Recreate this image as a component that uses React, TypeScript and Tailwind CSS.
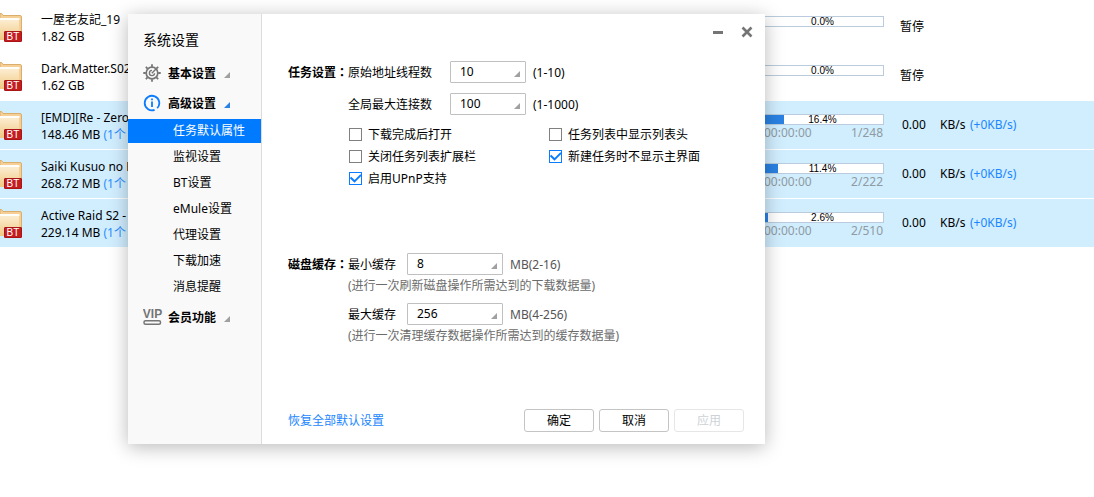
import { ReactNode } from "react";

interface Task {
  name: string;
  size: string;
  files?: string;
  percent: number;
  parts?: string;
}

const tasks: Task[] = [
  { name: "一屋老友記_19", size: "1.82 GB", percent: 0 },
  { name: "Dark.Matter.S02", size: "1.62 GB", percent: 0 },
  { name: "[EMD][Re - Zero", size: "148.46 MB", files: "(1个", percent: 16.4, parts: "1/248" },
  { name: "Saiki Kusuo no P", size: "268.72 MB", files: "(1个", percent: 11.4, parts: "2/222" },
  { name: "Active Raid S2 -", size: "229.14 MB", files: "(1个", percent: 2.6, parts: "2/510" },
];

const advancedItems = [
  "任务默认属性",
  "监视设置",
  "BT设置",
  "eMule设置",
  "代理设置",
  "下载加速",
  "消息提醒",
];

function FolderIcon() {
  return (
    <svg width="22" height="30" viewBox="0 0 22 30" className="mt-px shrink-0" aria-hidden="true">
      <defs>
        <linearGradient id="folder" x1="0" y1="0" x2="0" y2="1">
          <stop offset="0" stopColor="#fdf0d8" />
          <stop offset="1" stopColor="#f0c983" />
        </linearGradient>
      </defs>
      <path d="M0 1.5h1.5l1.5 2H20q1.5 0 1.5 1.5V27H0z" fill="#f5cf96" stroke="#dcae6c" />
      <path d="M0 6h19v22H0z" fill="url(#folder)" />
      <path d="M0 7h19.5" stroke="#fffdf8" strokeWidth="2" />
      <rect x="4.5" y="19.5" width="17" height="10" rx="0.5" fill="#c41d1f" stroke="#a91416" />
      <text x="13" y="28" textAnchor="middle" fontSize="10" fontFamily="Liberation Sans, sans-serif" fill="#fff">
        BT
      </text>
    </svg>
  );
}

function GearIcon() {
  return (
    <svg width="18" height="18" viewBox="0 0 18 18" fill="none" stroke="#757575" aria-hidden="true">
      <circle cx="9" cy="9" r="5.8" strokeWidth="1.7" />
      <path
        d="M9 0.3v2.5M9 15.2v2.5M0.3 9h2.5M15.2 9h2.5M2.8 2.8l1.8 1.8M13.4 13.4l1.8 1.8M2.8 15.2l1.8-1.8M13.4 4.6l1.8-1.8"
        strokeWidth="1.8"
      />
      <path d="M11.6 9.2A2.6 2.6 0 1 1 9 6.4M8.8 9.2l4.2-4.2" strokeWidth="1.4" />
    </svg>
  );
}

function InfoIcon() {
  return (
    <svg width="18" height="18" viewBox="0 0 18 18" fill="none" stroke="#0a7cff" aria-hidden="true">
      <path d="M11.6 15.9A7.3 7.3 0 1 1 14.2 14.2" strokeWidth="1.8" />
      <path d="M9 7.5V13M9 4.5v1.8" strokeWidth="1.8" />
    </svg>
  );
}

function VipIcon() {
  return (
    <svg width="20" height="18" viewBox="0 0 20 18" aria-hidden="true">
      <text x="9.5" y="10" textAnchor="middle" fontSize="12" fontFamily="Liberation Sans, sans-serif" fill="#757575">
        VIP
      </text>
      <rect x="1" y="12.7" width="16.5" height="3.5" rx="1.5" fill="none" stroke="#757575" strokeWidth="1.5" />
    </svg>
  );
}

function Corner({ className }: { className: string }) {
  return (
    <svg width="6" height="6" viewBox="0 0 6 6" className={className} aria-hidden="true">
      <path d="M6 0v6H0z" fill="currentColor" />
    </svg>
  );
}

function TaskRow({ task }: { task: Task }) {
  const active = Boolean(task.parts);
  return (
    <li className={`flex h-[49px] border-b border-white ${active ? "bg-[#d1eeff]" : "bg-white"}`}>
      <div className="flex flex-1 pt-2">
        <FolderIcon />
        <div className="ml-[19px] whitespace-nowrap">
          <p>{task.name}</p>
          <p>
            {task.size} <span className="text-[#2a8cff]">{task.files}</span>
          </p>
        </div>
      </div>
      <div className="w-[120px] pt-[13px]">
        <div className="relative h-[11px] border border-[#b9cbdc] bg-white">
          <div className="h-full bg-[#2a82e4]" style={{ width: `${task.percent}%` }} />
          <span className="absolute inset-0 pr-[3px] text-center font-['Liberation_Sans',sans-serif] text-[10px] leading-[10px]">
            {task.percent.toFixed(1)}%
          </span>
        </div>
        {active && (
          <div className="flex justify-between pr-px leading-4 text-[#8f9aa2]">
            <span>00:00:00</span>
            <span>{task.parts}</span>
          </div>
        )}
      </div>
      {active ? (
        <div className="flex w-[210px] items-center pb-[2px] pl-[18px]">
          <span className="w-[38px]">0.00</span>
          <span className="w-[30px]">KB/s</span>
          <span className="text-[#1a86ff]">(+0KB/s)</span>
        </div>
      ) : (
        <div className="flex w-[210px] items-center pb-[2px] pl-4">暂停</div>
      )}
    </li>
  );
}

function NavHeading({ icon, label, open }: { icon: ReactNode; label: string; open?: boolean }) {
  return (
    <button type="button" className="flex h-[30px] w-full items-center pl-[15px] font-bold">
      <span className="w-[25px]">{icon}</span>
      {label}
      <Corner className={open ? "ml-2 mt-1 text-[#2a82e4]" : "ml-2 mt-1 text-[#a0a0a0]"} />
    </button>
  );
}

function SectionTitle({ text }: { text: string }) {
  return (
    <h2 className="w-[60px] font-bold leading-[22px] whitespace-nowrap">
      {text}
      <span className="font-['Noto_Sans_CJK_TC',sans-serif]" lang="zh-Hant">：</span>
    </h2>
  );
}

function Picker({ id, value, options, wide }: { id: string; value: string; options: string[]; wide?: boolean }) {
  return (
    <span className={`relative ${wide ? "w-24" : "w-[76px]"}`}>
      <select
        id={id}
        defaultValue={value}
        className="block h-[22px] w-full appearance-none rounded-[1px] border border-[#c0c0c0] bg-white pl-[9px] text-xs"
      >
        {options.map((o) => (
          <option key={o}>{o}</option>
        ))}
      </select>
      <Corner className="pointer-events-none absolute right-[6px] bottom-[6px] text-[#a0a0a0]" />
    </span>
  );
}

function Check({ label, checked }: { label: string; checked?: boolean }) {
  return (
    <label className="flex h-[22px] items-center">
      <span className="relative mr-[6px] h-[13px] w-[13px]">
        <input
          type="checkbox"
          defaultChecked={checked}
          className="peer block h-[13px] w-[13px] appearance-none border border-[#808080] bg-white checked:border-[#0a7cff]"
        />
        <svg
          viewBox="0 0 13 13"
          className="pointer-events-none absolute inset-0 hidden peer-checked:block"
          fill="none"
          stroke="#0a7cff"
          strokeWidth="1.9"
          aria-hidden="true"
        >
          <path d="M1.5 5.5l4 3.8L12 2.8" />
        </svg>
      </span>
      {label}
    </label>
  );
}

function SettingsDialog() {
  return (
    <div
      role="dialog"
      aria-label="系统设置"
      className="absolute top-[14px] left-32 flex w-[637px] bg-white shadow-[0_3px_18px_rgba(0,0,0,0.28)]"
    >
      <nav className="w-[134px] border-r border-[#dcdcdc] bg-[#f9f9f9]">
        <h1 className="flex h-11 items-center pt-2 pl-[15px] text-sm">系统设置</h1>
        <NavHeading icon={<GearIcon />} label="基本设置" />
        <NavHeading icon={<InfoIcon />} label="高级设置" open />
        <ul className="flex flex-col gap-[2px] pt-px pb-[3px]">
          {advancedItems.map((item, i) => (
            <li key={item}>
              <button
                type="button"
                className={`block h-6 w-full pb-[2px] pl-[45px] text-left ${i === 0 ? "bg-[#007aff] text-white" : ""}`}
              >
                {item}
              </button>
            </li>
          ))}
        </ul>
        <NavHeading icon={<VipIcon />} label="会员功能" />
      </nav>

      <main className="flex flex-1 flex-col">
        <div className="flex h-9 items-center justify-end gap-[17px] pr-3">
          <button type="button" aria-label="最小化">
            <svg width="11" height="12" viewBox="0 0 11 12">
              <path d="M0 6.5h10" stroke="#757575" strokeWidth="3" />
            </svg>
          </button>
          <button type="button" aria-label="关闭">
            <svg width="12" height="12" viewBox="0 0 12 12">
              <path d="M1.5 1.5l9 9M10.5 1.5l-9 9" stroke="#757575" strokeWidth="2.6" />
            </svg>
          </button>
        </div>

        <section className="flex pt-[11px] pl-[26px]">
          <SectionTitle text="任务设置" />
          <div>
            <div className="flex items-center">
              <label htmlFor="threads" className="w-[102px]">原始地址线程数</label>
              <Picker id="threads" value="10" options={["1", "5", "10"]} />
              <span className="ml-[7px]">(1-10)</span>
            </div>
            <div className="mt-[10px] flex items-center">
              <label htmlFor="connections" className="w-[102px]">全局最大连接数</label>
              <Picker id="connections" value="100" options={["50", "100", "500", "1000"]} />
              <span className="ml-[7px]">(1-1000)</span>
            </div>
            <div className="mt-2 flex pl-px">
              <div className="w-[200px]">
                <Check label="下载完成后打开" />
                <Check label="关闭任务列表扩展栏" />
                <Check label="启用UPnP支持" checked />
              </div>
              <div>
                <Check label="任务列表中显示列表头" />
                <Check label="新建任务时不显示主界面" checked />
              </div>
            </div>
          </div>
        </section>

        <section className="mt-16 flex pl-[26px]">
          <SectionTitle text="磁盘缓存" />
          <div>
            <div className="flex items-center">
              <label htmlFor="min-cache" className="w-[59px]">最小缓存</label>
              <Picker id="min-cache" value="8" options={["2", "4", "8", "16"]} wide />
              <span className="ml-[7px] text-[#555]">MB(2-16)</span>
            </div>
            <p className="pt-[2px] text-[#6b6b6b]">(进行一次刷新磁盘操作所需达到的下载数据量)</p>
            <div className="mt-[9px] flex items-center">
              <label htmlFor="max-cache" className="w-[59px]">最大缓存</label>
              <Picker id="max-cache" value="256" options={["4", "64", "128", "256"]} wide />
              <span className="ml-[7px] text-[#555]">MB(4-256)</span>
            </div>
            <p className="pt-[2px] text-[#6b6b6b]">(进行一次清理缓存数据操作所需达到的缓存数据量)</p>
          </div>
        </section>

        <footer className="mt-[65px] flex items-center gap-[5px] pr-[21px] pb-3 pl-[26px]">
          <a href="#reset" className="mr-auto text-[#1a86ff]">恢复全部默认设置</a>
          <button type="button" className="h-[23px] w-[70px] rounded-[3px] border border-[#c4c4c4]">确定</button>
          <button type="button" className="h-[23px] w-[70px] rounded-[3px] border border-[#c4c4c4]">取消</button>
          <button type="button" disabled className="h-[23px] w-[70px] rounded-[3px] border border-[#e6e6e6] text-[#cdd2d6]">应用</button>
        </footer>
      </main>
    </div>
  );
}

export default function App() {
  return (
    <div className="relative min-h-screen overflow-hidden bg-white pt-[3px] font-['Noto_Sans','Noto_Sans_CJK_SC',sans-serif] text-xs leading-[17px] text-black">
      <ul>
        {tasks.map((task) => (
          <TaskRow key={task.name} task={task} />
        ))}
      </ul>
      <SettingsDialog />
    </div>
  );
}
